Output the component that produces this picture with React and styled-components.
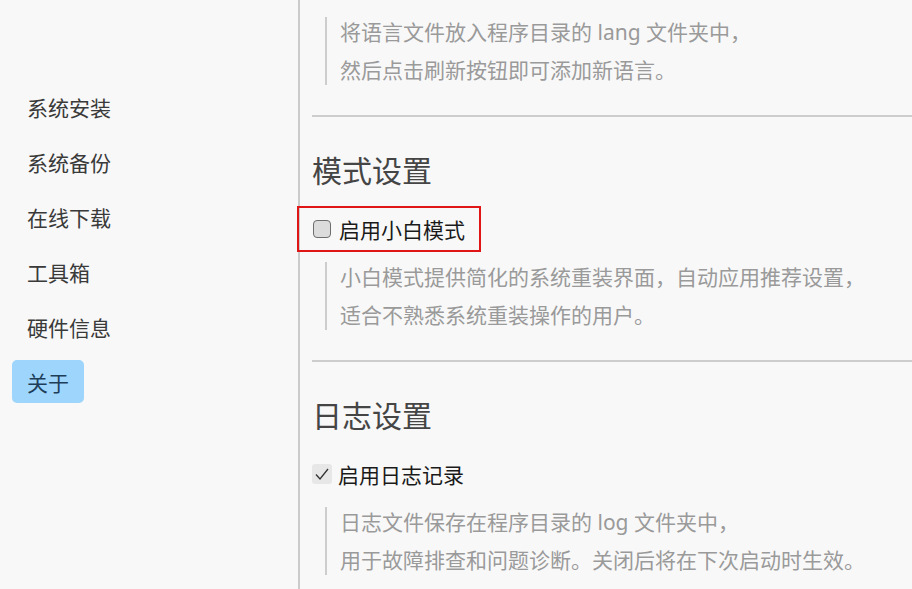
import React from "react";
import styled, { createGlobalStyle } from "styled-components";

const Global = createGlobalStyle`
  html, body { margin: 0; padding: 0; background: #f8f8f8; }
  body {
    font-family: "Noto Sans", "Noto Sans CJK SC", sans-serif;
    overflow: hidden;
  }
  * { box-sizing: border-box; }
`;

const Layout = styled.div`
  display: grid;
  grid-template-columns: 300px 1fr;
  width: 912px;
  height: 589px;
  overflow: hidden;
  background: #f8f8f8;
`;

const Sidebar = styled.nav`
  border-right: 2px solid #cbcbcb;
  padding: 85px 0 0 12px;
  display: flex;
  flex-direction: column;
  align-items: flex-start;
  gap: 12px;
`;

const NavItem = styled.div`
  flex-shrink: 0;
  height: 43px;
  display: inline-flex;
  align-items: center;
  padding: 0 15px;
  border-radius: 5px;
  font-size: 21px;
  color: ${(p) => (p.$active ? "#1d3d58" : "#3a3a3a")};
  background: ${(p) => (p.$active ? "#9dd5fd" : "transparent")};
`;

const Content = styled.main`
  padding: 17px 0 0 12px;
  display: flex;
  flex-direction: column;
  align-items: flex-start;
  min-width: 0;
  & > * { flex-shrink: 0; }
`;

const Quote = styled.div`
  margin: ${(p) => (p.$top ? "0" : "10px")} 0 30px 13px;
  padding-left: 13px;
  border-left: 2px solid #cdcdcd;
  display: flex;
  flex-direction: column;
  gap: 8px;
`;

const QuoteLine = styled.div`
  font-size: 21px;
  line-height: 30px;
  color: #9a9a9a;
  white-space: nowrap;
`;

const Divider = styled.hr`
  align-self: stretch;
  margin: 0;
  border: none;
  height: 2px;
  background: #cdcdcd;
`;

const Heading = styled.h2`
  margin: 34px 0 0 0;
  font-size: 30px;
  line-height: 40px;
  font-weight: 400;
  color: #454545;
`;

const OptionRow = styled.label`
  margin: 15px 0 0 -15px;
  height: 46px;
  padding: 0 14px 0 ${(p) => (p.$checked ? "13px" : "14px")};
  border: 2px solid ${(p) => (p.$highlight ? "#e01616" : "transparent")};
  display: inline-flex;
  align-items: center;
  gap: ${(p) => (p.$checked ? "6px" : "8px")};
`;

const Box = styled.span`
  width: ${(p) => (p.$checked ? "20px" : "18px")};
  height: ${(p) => (p.$checked ? "20px" : "18px")};
  display: inline-flex;
  align-items: center;
  justify-content: center;
  border-radius: ${(p) => (p.$checked ? "3px" : "4px")};
  border: ${(p) => (p.$checked ? "none" : "1.5px solid #6e6e6e")};
  background: ${(p) => (p.$checked ? "#e7e7e7" : "#dcdcdc")};
`;

const Label = styled.span`
  font-size: 21px;
  color: #1a1a1a;
`;

const Checkbox = ({ checked, label, highlight }) => (
  <OptionRow $highlight={highlight} $checked={checked}>
    <Box $checked={checked}>
      {checked && (
        <svg width="16" height="14" viewBox="0 0 16 14">
          <polyline points="2,7.5 6,12 14,2" fill="none" stroke="#333" strokeWidth="1.3" />
        </svg>
      )}
    </Box>
    <Label>{label}</Label>
  </OptionRow>
);

const navItems = ["系统安装", "系统备份", "在线下载", "工具箱", "硬件信息", "关于"];

export default function App() {
  return (
    <>
      <Global />
      <Layout>
        <Sidebar>
          {navItems.map((n) => (
            <NavItem key={n} $active={n === "关于"}>{n}</NavItem>
          ))}
        </Sidebar>
        <Content>
          <Quote $top>
            <QuoteLine>将语言文件放入程序目录的 lang 文件夹中，</QuoteLine>
            <QuoteLine>然后点击刷新按钮即可添加新语言。</QuoteLine>
          </Quote>
          <Divider />
          <Heading>模式设置</Heading>
          <Checkbox label="启用小白模式" highlight />
          <Quote>
            <QuoteLine>小白模式提供简化的系统重装界面，自动应用推荐设置，</QuoteLine>
            <QuoteLine>适合不熟悉系统重装操作的用户。</QuoteLine>
          </Quote>
          <Divider />
          <Heading>日志设置</Heading>
          <Checkbox label="启用日志记录" checked />
          <Quote>
            <QuoteLine>日志文件保存在程序目录的 log 文件夹中，</QuoteLine>
            <QuoteLine>用于故障排查和问题诊断。关闭后将在下次启动时生效。</QuoteLine>
          </Quote>
        </Content>
      </Layout>
    </>
  );
}
